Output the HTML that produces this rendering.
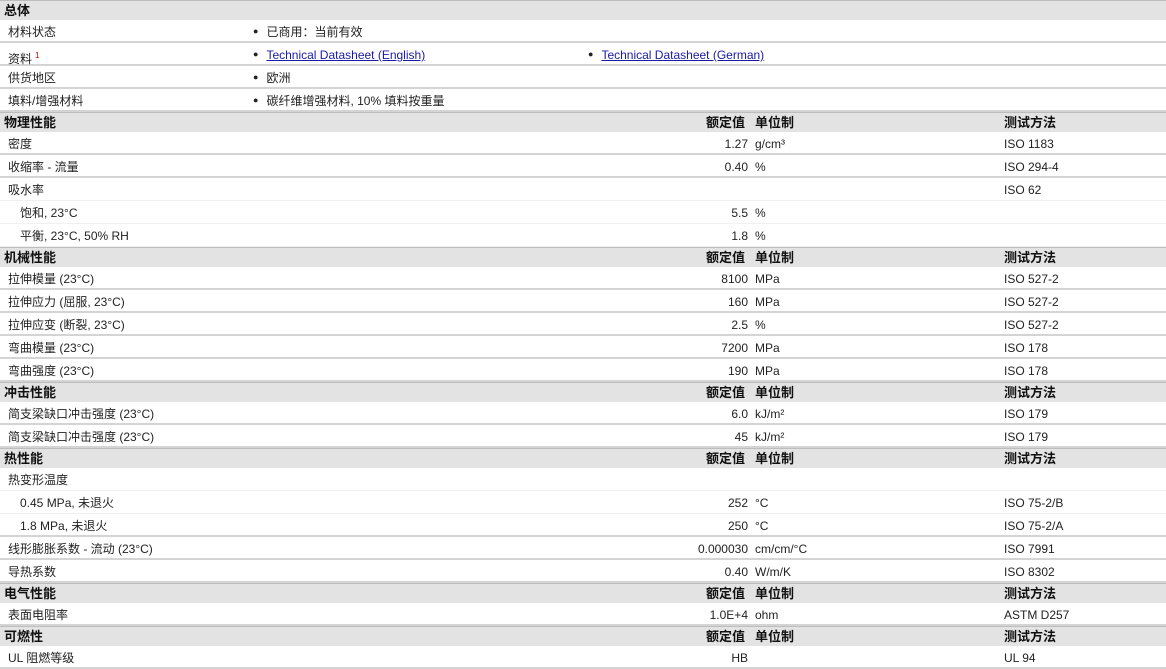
<!DOCTYPE html>
<html><head><meta charset="utf-8"><style>
*{margin:0;padding:0;box-sizing:border-box}
body{width:1166px;height:669px;overflow:hidden;background:#fff;font-family:"Liberation Sans","Noto Sans CJK SC",sans-serif;font-size:12px;color:#222}
.r{position:relative;height:23px;border-bottom:2px solid #d4d4d4;line-height:21px;white-space:nowrap}
.r.s{border-bottom:1px solid #f0f0f0;height:23px}
.r span{top:2px}
.h{position:relative;height:20px;background:#e3e3e3;border-top:1px solid #bdbdbd;line-height:19px;font-weight:bold;font-size:13px;color:#111;white-space:nowrap}
span{position:absolute;top:0}
.l{left:8px}.l2{left:20px}.l1{left:4px}
.v{right:418px;text-align:right}
.u{left:755px}.t{left:1004px}
.b1{left:253px}.b2{left:588px}
.b1:before,.b2:before{content:"●";font-size:9px;margin-right:8px;position:relative;top:-2px}
a{color:#1a1aa6;text-decoration:underline}
sup{font-size:8px;color:#c00;margin-left:3px}
</style></head><body>
<div class="h"><span class="l1">总体</span></div>
<div class="r"><span class="l">材料状态</span><span class="b1">已商用：当前有效</span></div>
<div class="r"><span class="l">资料<sup>1</sup></span><span class="b1"><a>Technical Datasheet (English)</a></span><span class="b2"><a>Technical Datasheet (German)</a></span></div>
<div class="r"><span class="l">供货地区</span><span class="b1">欧洲</span></div>
<div class="r"><span class="l">填料/增强材料</span><span class="b1">碳纤维增强材料, 10% 填料按重量</span></div>
<div class="h"><span class="l1">物理性能</span><span style="left:706px">额定值</span><span class="u">单位制</span><span class="t">测试方法</span></div>
<div class="r"><span class="l">密度</span><span class="v">1.27</span><span class="u">g/cm³</span><span class="t">ISO 1183</span></div>
<div class="r"><span class="l">收缩率 - 流量</span><span class="v">0.40</span><span class="u">%</span><span class="t">ISO 294-4</span></div>
<div class="r s"><span class="l">吸水率</span><span class="t">ISO 62</span></div>
<div class="r s"><span class="l2">饱和, 23°C</span><span class="v">5.5</span><span class="u">%</span></div>
<div class="r s"><span class="l2">平衡, 23°C, 50% RH</span><span class="v">1.8</span><span class="u">%</span></div>
<div class="h"><span class="l1">机械性能</span><span style="left:706px">额定值</span><span class="u">单位制</span><span class="t">测试方法</span></div>
<div class="r"><span class="l">拉伸模量 (23°C)</span><span class="v">8100</span><span class="u">MPa</span><span class="t">ISO 527-2</span></div>
<div class="r"><span class="l">拉伸应力 (屈服, 23°C)</span><span class="v">160</span><span class="u">MPa</span><span class="t">ISO 527-2</span></div>
<div class="r"><span class="l">拉伸应变 (断裂, 23°C)</span><span class="v">2.5</span><span class="u">%</span><span class="t">ISO 527-2</span></div>
<div class="r"><span class="l">弯曲模量 (23°C)</span><span class="v">7200</span><span class="u">MPa</span><span class="t">ISO 178</span></div>
<div class="r"><span class="l">弯曲强度 (23°C)</span><span class="v">190</span><span class="u">MPa</span><span class="t">ISO 178</span></div>
<div class="h"><span class="l1">冲击性能</span><span style="left:706px">额定值</span><span class="u">单位制</span><span class="t">测试方法</span></div>
<div class="r"><span class="l">简支梁缺口冲击强度 (23°C)</span><span class="v">6.0</span><span class="u">kJ/m²</span><span class="t">ISO 179</span></div>
<div class="r"><span class="l">简支梁缺口冲击强度 (23°C)</span><span class="v">45</span><span class="u">kJ/m²</span><span class="t">ISO 179</span></div>
<div class="h"><span class="l1">热性能</span><span style="left:706px">额定值</span><span class="u">单位制</span><span class="t">测试方法</span></div>
<div class="r s"><span class="l">热变形温度</span></div>
<div class="r s"><span class="l2">0.45 MPa, 未退火</span><span class="v">252</span><span class="u">°C</span><span class="t">ISO 75-2/B</span></div>
<div class="r"><span class="l2">1.8 MPa, 未退火</span><span class="v">250</span><span class="u">°C</span><span class="t">ISO 75-2/A</span></div>
<div class="r"><span class="l">线形膨胀系数 - 流动 (23°C)</span><span class="v">0.000030</span><span class="u">cm/cm/°C</span><span class="t">ISO 7991</span></div>
<div class="r"><span class="l">导热系数</span><span class="v">0.40</span><span class="u">W/m/K</span><span class="t">ISO 8302</span></div>
<div class="h"><span class="l1">电气性能</span><span style="left:706px">额定值</span><span class="u">单位制</span><span class="t">测试方法</span></div>
<div class="r"><span class="l">表面电阻率</span><span class="v">1.0E+4</span><span class="u">ohm</span><span class="t">ASTM D257</span></div>
<div class="h"><span class="l1">可燃性</span><span style="left:706px">额定值</span><span class="u">单位制</span><span class="t">测试方法</span></div>
<div class="r"><span class="l">UL 阻燃等级</span><span class="v">HB</span><span class="t">UL 94</span></div>
</body></html>
